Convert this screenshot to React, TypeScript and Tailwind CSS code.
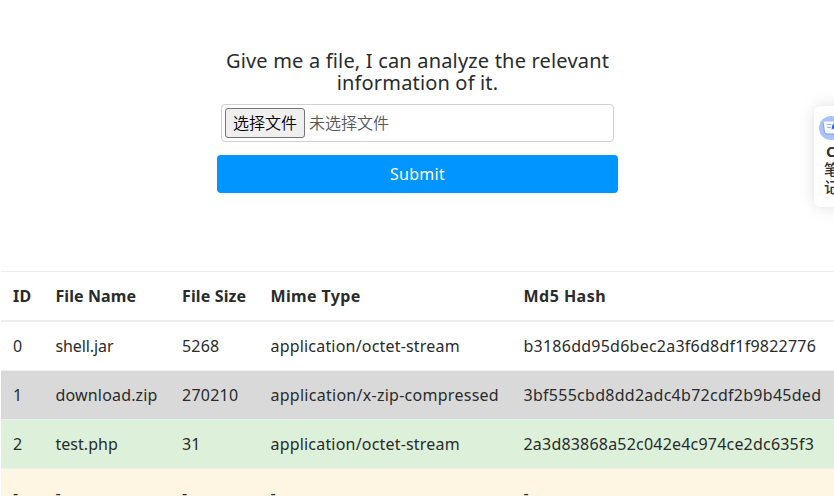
import React from "react";

type Cell = { text: string; fit: string };

const headers: Cell[] = [
  { text: "ID", fit: "tracking-[0.2px]" },
  { text: "File Name", fit: "tracking-[0.08px]" },
  { text: "File Size", fit: "tracking-[0.13px]" },
  { text: "Mime Type", fit: "tracking-[0.35px]" },
  { text: "Md5 Hash", fit: "tracking-[0.47px]" },
];

const rows: { tone: string; cells: Cell[] }[] = [
  {
    tone: "bg-white",
    cells: [
      { text: "0", fit: "" },
      { text: "shell.jar", fit: "tracking-[-0.1px]" },
      { text: "5268", fit: "tracking-[0.2px]" },
      { text: "application/octet-stream", fit: "tracking-[0.19px]" },
      { text: "b3186dd95d6bec2a3f6d8df1f9822776", fit: "tracking-[0.24px]" },
    ],
  },
  {
    tone: "bg-[#d9d9d9]",
    cells: [
      { text: "1", fit: "" },
      { text: "download.zip", fit: "tracking-[0.17px]" },
      { text: "270210", fit: "tracking-[0.25px]" },
      { text: "application/x-zip-compressed", fit: "tracking-[0.27px]" },
      { text: "3bf555cbd8dd2adc4b72cdf2b9b45ded", fit: "tracking-[0.27px]" },
    ],
  },
  {
    tone: "bg-[#ddf0d9]",
    cells: [
      { text: "2", fit: "" },
      { text: "test.php", fit: "tracking-[0.03px]" },
      { text: "31", fit: "" },
      { text: "application/octet-stream", fit: "tracking-[0.19px]" },
      { text: "2a3d83868a52c042e4c974ce2dc635f3", fit: "tracking-[0.2px]" },
    ],
  },
  {
    tone: "bg-[#fef6e2]",
    cells: ["-", "-", "-", "-", "-"].map((text) => ({ text, fit: "" })),
  },
];

const columns = "grid grid-cols-[42.5px_126.5px_88.5px_253px_1fr]";

function UploadForm() {
  return (
    <form className="ml-[217px] w-[401px] pt-[50px]" onSubmit={(e) => e.preventDefault()}>
      <h1 className="text-center text-[20px] leading-[22px] whitespace-nowrap text-[#292b2c]">
        <span className="tracking-[0.18px]">Give me a file, I can analyze the relevant</span>
        <br />
        <span className="tracking-[0.16px]">information of it.</span>
      </h1>
      <div className="mx-1 mt-[10px] flex h-[38px] w-[393px] items-center rounded-[4px] border border-[#ced0da] pl-[3px] text-[16px]">
        <button type="button" className="flex h-[30px] w-20 items-center justify-center rounded-[3px] border border-[#767676] bg-[#efefef] leading-none font-[350] text-black">
          选择文件
        </button>
        <span className="ml-1 leading-none font-[350] text-[#55595c]">未选择文件</span>
      </div>
      <button type="submit" className="mt-[13px] block h-[38px] w-full rounded-[4px] bg-[#0095ff] text-[16px] tracking-[0.25px] text-white">
        Submit
      </button>
    </form>
  );
}

function ResultTable() {
  return (
    <div role="table" className="mt-[78px] ml-px text-[16px] leading-6 whitespace-nowrap text-[#292b2c]">
      <div role="row" className={`${columns} h-[51px] border-t border-b-2 border-t-[#eceeef] border-b-[#eceeef] pt-3 font-bold`}>
        {headers.map((h) => (
          <div role="columnheader" key={h.text} className="pl-3">
            <span className={h.fit}>{h.text}</span>
          </div>
        ))}
      </div>
      {rows.map((row, i) => (
        <div role="row" key={i} className={`${columns} ${row.tone} ${i > 0 ? "h-[49px] border-t border-[#eceeef]" : "h-12"}`}>
          {row.cells.map((c, j) => (
            <div role="cell" key={j} className="pt-3 pl-3">
              <span className={c.fit}>{c.text}</span>
            </div>
          ))}
        </div>
      ))}
    </div>
  );
}

function NotesWidget() {
  return (
    <aside className="absolute top-[106px] left-[814px] h-[101px] w-10 rounded-[6px] bg-white pt-[10px] pl-[5px] text-[#333] shadow-[0_0_16px_rgba(0,0,0,0.13)]">
      <svg width="24" height="24" viewBox="0 0 24 24" className="block">
        <circle cx="12" cy="12" r="12" fill="#a9c3fa" />
        <path d="M3.5 5.5H17l1 12.5H7L5.5 16.500z" fill="#f8faff" />
        <path d="M4 5.500l1.500 11.200L8 18h9" fill="none" stroke="#7a9cf0" strokeWidth="1" />
        <path d="M7.500 8.500h5M8 11.500h4" stroke="#9db8f7" strokeWidth="1.200" />
        <path d="M12.500 13.500l.8-4L17 4l3 2-4 6z" fill="#315cf0" />
      </svg>
      <div className="ml-[7px] pt-px text-[15px] leading-[20px] font-bold">C</div>
      <div className="-mt-px ml-[5px] text-[15px] leading-[18px] font-medium">笔<br />记</div>
    </aside>
  );
}

export default function App() {
  return (
    <main className="relative h-[496px] w-[834px] overflow-hidden bg-white font-['Noto_Sans','Noto_Sans_CJK_SC',sans-serif]">
      <UploadForm />
      <ResultTable />
      <NotesWidget />
    </main>
  );
}
